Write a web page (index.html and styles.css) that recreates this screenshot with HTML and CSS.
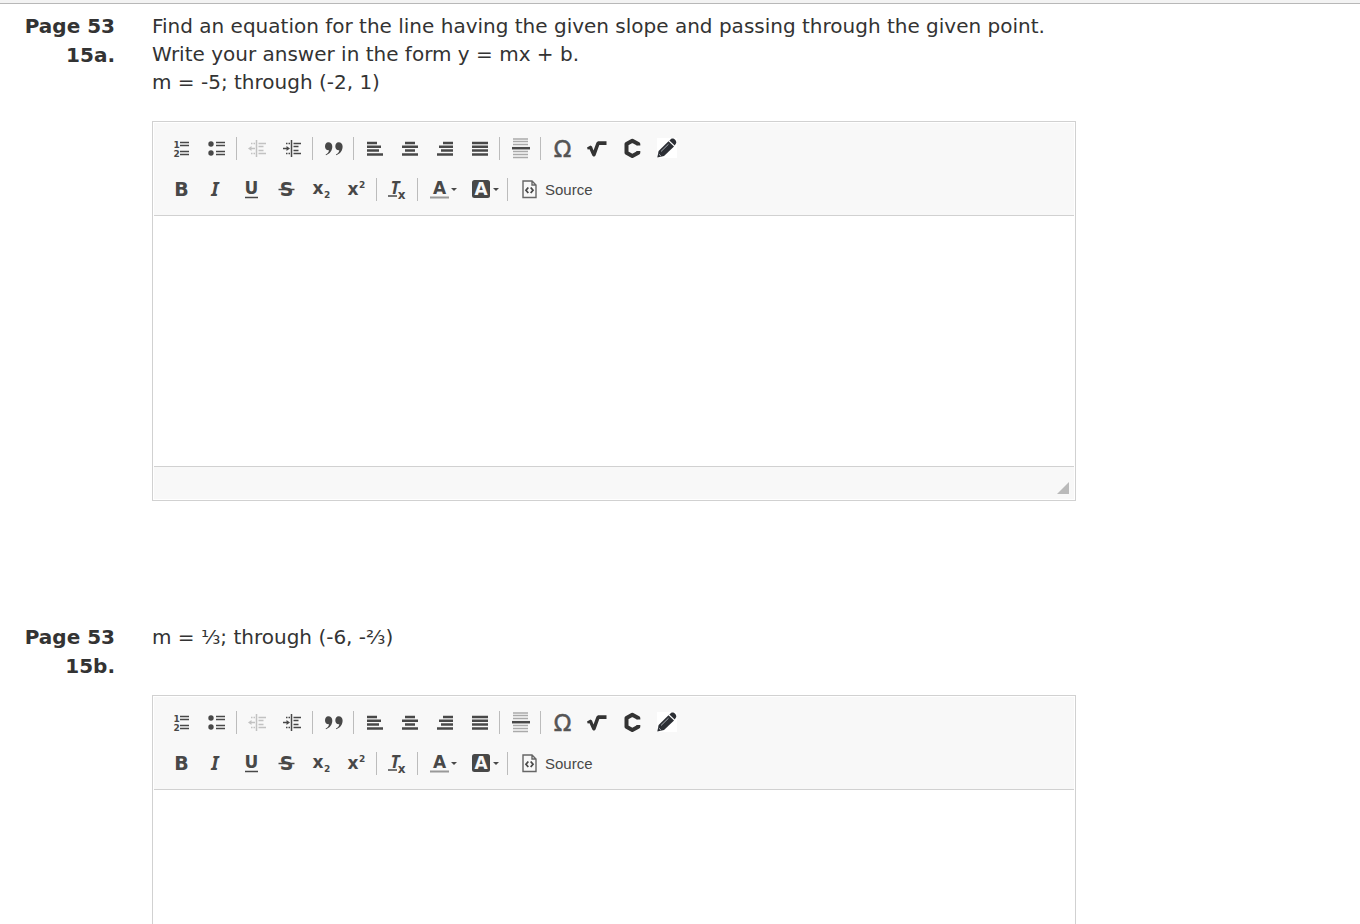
FILE: index.html
```html
<!DOCTYPE html>
<html lang="en">
<head>
    <meta charset="UTF-8">
    <meta name="viewport" content="width=device-width, initial-scale=1.0">
    <title>Page 53</title>
    <link rel="stylesheet" href="styles.css">
</head>
<body>
    <!-- toolbar icons, shared by every editor -->
    <svg class="sprite" aria-hidden="true">
        <symbol id="numbered" viewBox="0 0 21 21">
            <text class="digit" x="2.500" y="10">1</text>
            <text class="digit" x="2.500" y="18.500">2</text>
            <path class="line" d="M9 4.500h9M9 7.500h9M9 13.500h9M9 16.500h9"/>
        </symbol>
        <symbol id="bulleted" viewBox="0 0 21 21">
            <circle cx="5" cy="6" r="2.700"/>
            <circle cx="5" cy="15" r="2.700"/>
            <path class="line" d="M10 4.500h9M10 7.500h9M10 13.500h9M10 16.500h9"/>
        </symbol>
        <symbol id="outdent" viewBox="0 0 21 21">
            <path class="line" d="M9.500 2v17M11.500 5.500h7.500M11.500 8.500h5M11.500 12.500h5M11.500 15.500h7.500M4 5.500h1.500M6.500 5.500h1.500M4 15.500h1.500M6.500 15.500h1.500M3 10.500h5"/>
            <path d="M1 10.500l3.500-2.500v5z"/>
        </symbol>
        <symbol id="indent" viewBox="0 0 21 21">
            <path class="line" d="M9.500 2v17M11.500 5.500h7.500M11.500 8.500h5M11.500 12.500h5M11.500 15.500h7.500M4 5.500h1.500M6.500 5.500h1.500M4 15.500h1.500M6.500 15.500h1.500M1 10.500h5"/>
            <path d="M8 10.500l-3.500-2.500v5z"/>
        </symbol>
        <symbol id="quote" viewBox="0 0 21 21">
            <path d="M5.300 4.300c2.500 0 4 1.700 4 4.300 0 4-2.300 7.400-6.300 8.700l-.4-.8c2-1 3.300-2.500 3.400-4.300-2.300.3-4-1.300-4-3.800 0-2.400 1.300-4.100 3.300-4.100z"/>
            <path d="M15.600 4.300c2.500 0 4 1.700 4 4.300 0 4-2.300 7.400-6.300 8.700l-.4-.8c2-1 3.300-2.500 3.400-4.300-2.300.3-4-1.300-4-3.800 0-2.400 1.300-4.100 3.300-4.100z"/>
        </symbol>
        <symbol id="align-left" viewBox="0 0 21 21">
            <path class="bar" d="M3 5h10M3 8.800h14M3 12.600h12M3 16.400h16"/>
        </symbol>
        <symbol id="align-center" viewBox="0 0 21 21">
            <path class="bar" d="M6 5h10M3 8.800h16M6 12.600h10M3 16.400h16"/>
        </symbol>
        <symbol id="align-right" viewBox="0 0 21 21">
            <path class="bar" d="M9 5h10M5 8.800h14M7 12.600h12M3 16.400h16"/>
        </symbol>
        <symbol id="justify" viewBox="0 0 21 21">
            <path class="bar" d="M3 5h16M3 8.800h16M3 12.600h16M3 16.400h16"/>
        </symbol>
        <symbol id="rule" viewBox="0 0 21 21">
            <path class="line faint" d="M3 1h15M3 3.500h15M3 6.500h15M3 13.500h15M3 16.500h15M3 19.500h15"/>
            <path class="bar" d="M2 10.200h18"/>
        </symbol>
        <symbol id="omega" viewBox="0 0 21 21">
            <text class="omega" x="11.500" y="18.500">Ω</text>
        </symbol>
        <symbol id="root" viewBox="0 0 21 21">
            <path class="dark" d="M1 9.500L4.500 7.500L6 8.500L7.500 12.500L10.500 4.500L12 3.300H20.500V7H13.300L9.500 17.500L8.500 18.500H7.300L6.300 17.500L3.500 11.300L1.700 11.500Z"/>
        </symbol>
        <symbol id="chem" viewBox="0 0 21 21">
            <path class="chem" d="M17.300 7.500V6L11.300 2.700L5.500 6V14.700L11.300 18L17.300 14.700V13"/>
        </symbol>
        <symbol id="pencil" viewBox="0 0 21 21">
            <path class="paper" d="M1 0h20v20H1z"/>
            <path class="ink" d="M1.300 19.500L2.600 13L12.500 3.300L18 8.500L8 18Z"/>
            <path class="ink" d="M13.400 2.500L15 1C16.300 0 18 .6 19.100 1.700C20.300 3 20.800 4.700 19.800 5.800L18.700 7.500Z"/>
            <path class="shine" d="M5 13.500L12.500 6.200M2.800 16L5 18.200"/>
        </symbol>
        <symbol id="bold" viewBox="0 0 21 21">
            <text class="letter" x="10.500" y="17">B</text>
        </symbol>
        <symbol id="italic" viewBox="0 0 21 21">
            <text class="letter slanted" x="9" y="17">I</text>
        </symbol>
        <symbol id="underline" viewBox="0 0 21 21">
            <text class="letter small" x="10.500" y="15">U</text>
            <path class="line" d="M4 18.500h13"/>
        </symbol>
        <symbol id="strike" viewBox="0 0 21 21">
            <text class="letter" x="10.500" y="17">S</text>
            <path class="line" d="M2.500 10.500h16"/>
        </symbol>
        <symbol id="subscript" viewBox="0 0 21 21">
            <text class="letter small" x="7" y="15">x</text>
            <text class="digit" x="13" y="18.500">2</text>
        </symbol>
        <symbol id="superscript" viewBox="0 0 21 21">
            <text class="letter small" x="7" y="16">x</text>
            <text class="digit" x="13" y="9">2</text>
        </symbol>
        <symbol id="clear" viewBox="0 0 21 21">
            <text class="letter small slanted" x="8" y="14.500">T</text>
            <text class="letter tiny" x="14.500" y="20">x</text>
            <path class="line" d="M1 17h9"/>
        </symbol>
        <symbol id="text-color" viewBox="0 0 21 21">
            <text class="letter small" x="10.500" y="15">A</text>
            <path class="bar pale" d="M1 18.500h19"/>
        </symbol>
        <symbol id="fill-color" viewBox="0 0 21 21">
            <rect x="1" y="1" width="18" height="18" rx="2.500"/>
            <text class="letter small reversed" x="10" y="16">A</text>
        </symbol>
        <symbol id="source" viewBox="0 0 21 21">
            <path class="outline" d="M4 2h9l4 4v12.500H4zM13 2v4h4"/>
            <path class="outline thick" d="M9.300 8.500L7 11.300L9.300 14M11.700 8.500L14 11.300L11.700 14"/>
        </symbol>
    </svg>

    <div class="top-bar"></div>

    <main>
        <section class="question">
            <h2>Page 53 15a.</h2>
            <div class="answer">
                <p>Find an equation for the line having the given slope and passing through the given point.<br>Write your answer in the form y = mx + b.<br>m = -5; through (-2, 1)</p>
                <div class="editor">
                    <div class="toolbar">
                        <div class="row">
                            <button type="button" aria-label="Numbered list"><svg><use href="#numbered"/></svg></button>
                            <button type="button" aria-label="Bulleted list"><svg><use href="#bulleted"/></svg></button>
                            <span class="sep"></span>
                            <button type="button" aria-label="Decrease indent" disabled><svg><use href="#outdent"/></svg></button>
                            <button type="button" aria-label="Increase indent"><svg><use href="#indent"/></svg></button>
                            <span class="sep"></span>
                            <button type="button" aria-label="Block quote"><svg><use href="#quote"/></svg></button>
                            <span class="sep"></span>
                            <button type="button" aria-label="Align left"><svg><use href="#align-left"/></svg></button>
                            <button type="button" aria-label="Center"><svg><use href="#align-center"/></svg></button>
                            <button type="button" aria-label="Align right"><svg><use href="#align-right"/></svg></button>
                            <button type="button" aria-label="Justify"><svg><use href="#justify"/></svg></button>
                            <span class="sep"></span>
                            <button type="button" aria-label="Horizontal line"><svg><use href="#rule"/></svg></button>
                            <span class="sep"></span>
                            <button type="button" aria-label="Special character"><svg><use href="#omega"/></svg></button>
                            <button type="button" aria-label="Math"><svg><use href="#root"/></svg></button>
                            <button type="button" aria-label="Chemistry"><svg><use href="#chem"/></svg></button>
                            <button type="button" aria-label="Draw"><svg><use href="#pencil"/></svg></button>
                        </div>
                        <div class="row">
                            <button type="button" aria-label="Bold"><svg><use href="#bold"/></svg></button>
                            <button type="button" aria-label="Italic"><svg><use href="#italic"/></svg></button>
                            <button type="button" aria-label="Underline"><svg><use href="#underline"/></svg></button>
                            <button type="button" aria-label="Strikethrough"><svg><use href="#strike"/></svg></button>
                            <button type="button" aria-label="Subscript"><svg><use href="#subscript"/></svg></button>
                            <button type="button" aria-label="Superscript"><svg><use href="#superscript"/></svg></button>
                            <span class="sep"></span>
                            <button type="button" aria-label="Remove format"><svg><use href="#clear"/></svg></button>
                            <span class="sep"></span>
                            <button type="button" class="menu" aria-label="Text color"><svg><use href="#text-color"/></svg><span class="arrow"></span></button>
                            <button type="button" class="menu" aria-label="Background color"><svg><use href="#fill-color"/></svg><span class="arrow"></span></button>
                            <span class="sep"></span>
                            <button type="button" class="source"><svg><use href="#source"/></svg>Source</button>
                        </div>
                    </div>
                    <textarea aria-label="Answer 15a"></textarea>
                    <div class="footer"><span class="resizer"></span></div>
                </div>
            </div>
        </section>

        <section class="question">
            <h2>Page 53 15b.</h2>
            <div class="answer">
                <p>m = ⅓; through (-6, -⅔)</p>
                <div class="editor">
                    <div class="toolbar">
                        <div class="row">
                            <button type="button" aria-label="Numbered list"><svg><use href="#numbered"/></svg></button>
                            <button type="button" aria-label="Bulleted list"><svg><use href="#bulleted"/></svg></button>
                            <span class="sep"></span>
                            <button type="button" aria-label="Decrease indent" disabled><svg><use href="#outdent"/></svg></button>
                            <button type="button" aria-label="Increase indent"><svg><use href="#indent"/></svg></button>
                            <span class="sep"></span>
                            <button type="button" aria-label="Block quote"><svg><use href="#quote"/></svg></button>
                            <span class="sep"></span>
                            <button type="button" aria-label="Align left"><svg><use href="#align-left"/></svg></button>
                            <button type="button" aria-label="Center"><svg><use href="#align-center"/></svg></button>
                            <button type="button" aria-label="Align right"><svg><use href="#align-right"/></svg></button>
                            <button type="button" aria-label="Justify"><svg><use href="#justify"/></svg></button>
                            <span class="sep"></span>
                            <button type="button" aria-label="Horizontal line"><svg><use href="#rule"/></svg></button>
                            <span class="sep"></span>
                            <button type="button" aria-label="Special character"><svg><use href="#omega"/></svg></button>
                            <button type="button" aria-label="Math"><svg><use href="#root"/></svg></button>
                            <button type="button" aria-label="Chemistry"><svg><use href="#chem"/></svg></button>
                            <button type="button" aria-label="Draw"><svg><use href="#pencil"/></svg></button>
                        </div>
                        <div class="row">
                            <button type="button" aria-label="Bold"><svg><use href="#bold"/></svg></button>
                            <button type="button" aria-label="Italic"><svg><use href="#italic"/></svg></button>
                            <button type="button" aria-label="Underline"><svg><use href="#underline"/></svg></button>
                            <button type="button" aria-label="Strikethrough"><svg><use href="#strike"/></svg></button>
                            <button type="button" aria-label="Subscript"><svg><use href="#subscript"/></svg></button>
                            <button type="button" aria-label="Superscript"><svg><use href="#superscript"/></svg></button>
                            <span class="sep"></span>
                            <button type="button" aria-label="Remove format"><svg><use href="#clear"/></svg></button>
                            <span class="sep"></span>
                            <button type="button" class="menu" aria-label="Text color"><svg><use href="#text-color"/></svg><span class="arrow"></span></button>
                            <button type="button" class="menu" aria-label="Background color"><svg><use href="#fill-color"/></svg><span class="arrow"></span></button>
                            <span class="sep"></span>
                            <button type="button" class="source"><svg><use href="#source"/></svg>Source</button>
                        </div>
                    </div>
                    <textarea aria-label="Answer 15b"></textarea>
                    <div class="footer"><span class="resizer"></span></div>
                </div>
            </div>
        </section>
    </main>
</body>
</html>
```

FILE: styles.css
```css
* {
    box-sizing: border-box;
}

body {
    margin: 0;
    background: #fff;
    color: #333;
    font-family: Verdana, "DejaVu Sans", sans-serif;
    font-size: 20px;
    line-height: 28px;
}

.sprite {
    display: none;
}

.top-bar {
    height: 4px;
    background: #f3f3f3;
    border-bottom: 1px solid #b8b8b8;
}

main {
    padding: 8px 24px 0;
}

.question {
    display: grid;
    grid-template-columns: 91px minmax(0, 924px);
    column-gap: 37px;
    margin-bottom: 122px;
}

h2 {
    margin: 0;
    font-size: 20px;
    font-weight: bold;
    line-height: 29px;
    text-align: right;
}

.answer p {
    min-height: 47px;
    margin: 0 0 25px;
}

/* editor */
.editor {
    padding: 1px;
    border: 1px solid #d1d1d1;
    background: #fff;
}

.toolbar {
    padding: 5px 10px;
    background: #f8f8f8;
    border-bottom: 1px solid #d1d1d1;
}

.row {
    display: flex;
    flex-wrap: wrap;
    align-items: center;
}

button {
    display: flex;
    align-items: center;
    height: 41px;
    padding: 0 7px;
    border: none;
    background: none;
    color: #484848;
    font-family: "Liberation Sans", Arial, sans-serif;
    font-size: 15px;
    cursor: pointer;
}

button:disabled {
    opacity: 0.3;
    cursor: default;
}

button svg {
    width: 21px;
    height: 21px;
    fill: #484848;
}

.menu {
    gap: 1px;
    padding: 0 6px 0 8px;
}

.source {
    gap: 5px;
    padding: 0 8px;
}

.sep {
    width: 1px;
    height: 23px;
    margin: 0 3px 0 2px;
    background: #bcbcbc;
}

.arrow {
    width: 6px;
    border: 3px solid transparent;
    border-top-color: #484848;
    border-bottom: none;
}

textarea {
    display: block;
    width: 100%;
    height: 250px;
    padding: 20px;
    border: none;
    outline: none;
    resize: none;
    font: inherit;
}

.footer {
    display: flex;
    justify-content: flex-end;
    align-items: flex-end;
    height: 33px;
    padding: 5px;
    background: #f8f8f8;
    border-top: 1px solid #d1d1d1;
}

.resizer {
    border: 6px solid transparent;
    border-right-color: #bababa;
    border-bottom-color: #bababa;
    cursor: se-resize;
}

/* icon parts */
.line {
    fill: none;
    stroke: #484848;
    stroke-width: 1.5;
}

.bar {
    fill: none;
    stroke: #484848;
    stroke-width: 2.5;
}

.faint {
    stroke: #aaa;
}

.pale {
    stroke: #999;
    stroke-width: 2;
}

.dark {
    fill: #333;
}

.chem {
    fill: none;
    stroke: #333;
    stroke-width: 4;
    stroke-linejoin: round;
}

.paper {
    fill: #fff;
}

.ink {
    fill: #2b2e34;
}

.shine {
    fill: none;
    stroke: #a8adb3;
    stroke-width: 1;
}

.outline {
    fill: none;
    stroke: #666;
    stroke-width: 1.4;
}

.thick {
    stroke: #484848;
    stroke-width: 1.8;
}

.letter {
    font-family: "DejaVu Sans", sans-serif;
    font-size: 19px;
    font-weight: bold;
    text-anchor: middle;
}

.small {
    font-size: 17px;
}

.tiny {
    font-size: 12px;
}

.slanted {
    font-family: "Noto Sans", sans-serif;
    font-style: italic;
}

.reversed {
    fill: #f8f8f8;
}

.digit {
    font-family: "DejaVu Sans", sans-serif;
    font-size: 9px;
    font-weight: bold;
}

.omega {
    font-family: "DejaVu Sans", sans-serif;
    font-size: 23px;
    text-anchor: middle;
    fill: #555;
    stroke: #555;
    stroke-width: 0.5;
}
```
